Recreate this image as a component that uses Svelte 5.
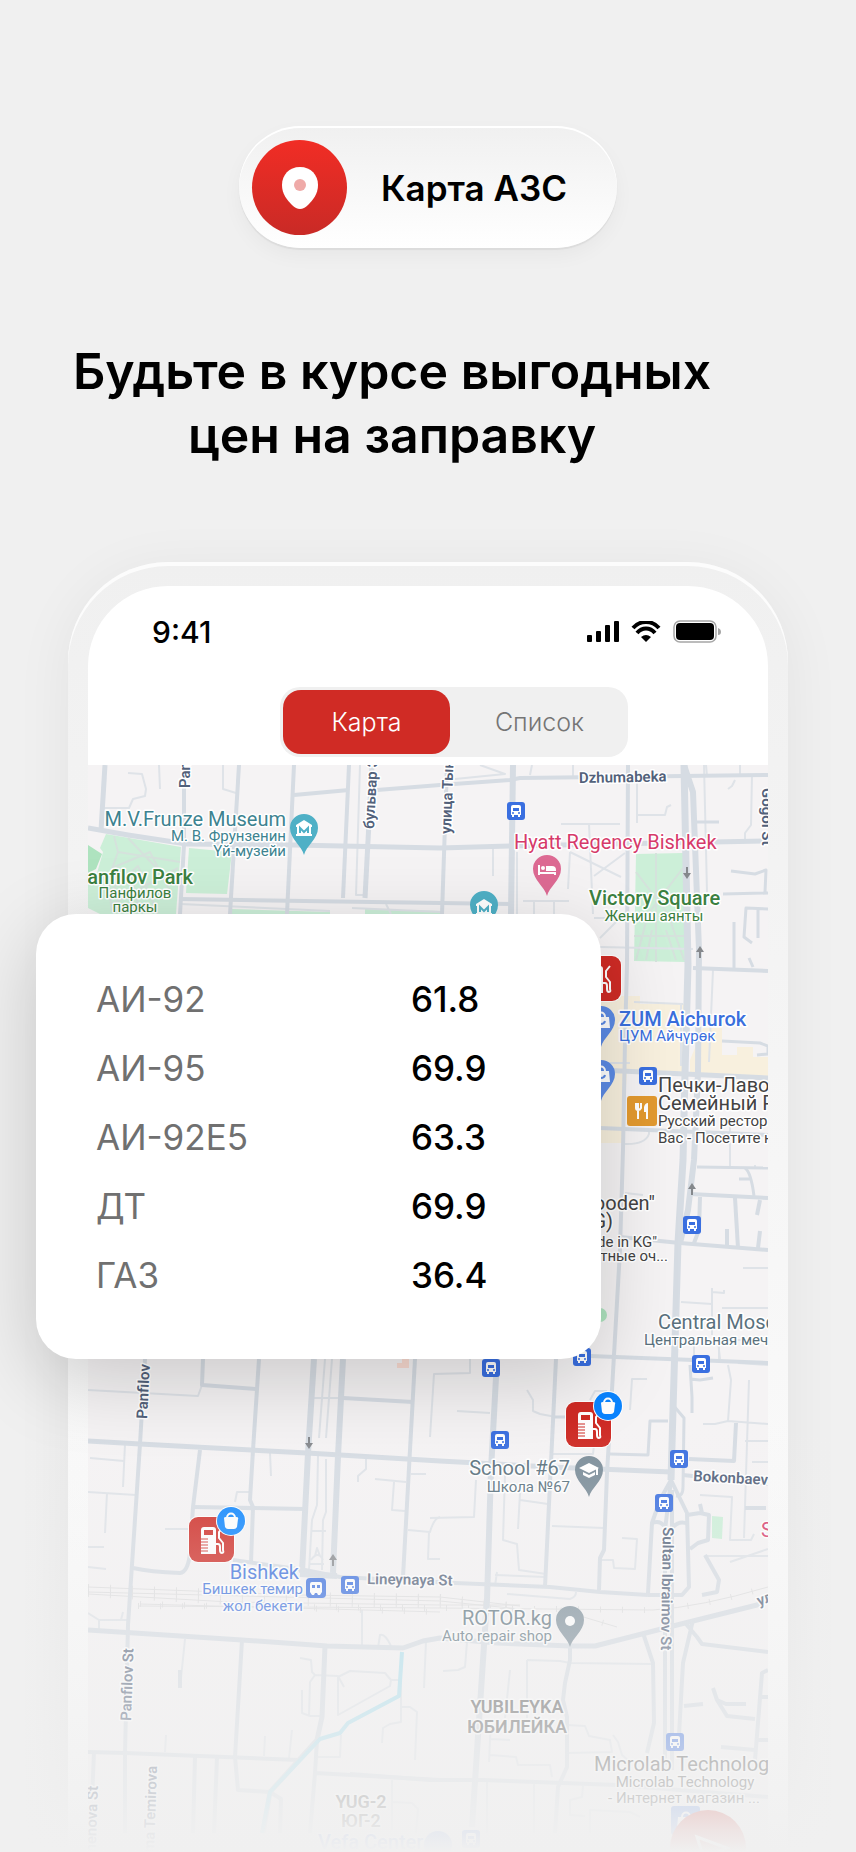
<script lang="ts">
    type Point = { x: number; y: number };
    type Road = { d: string; w: number };
    type Label = Point & {
        text: string;
        kind: string;
        small?: boolean;
        anchor?: "start" | "middle" | "end";
        rotate?: number;
    };

    const tabs = ["Карта", "Список"];
    let activeTab = $state("Карта");

    const prices = [
        { fuel: "АИ-92", price: "61.8" },
        { fuel: "АИ-95", price: "69.9" },
        { fuel: "АИ-92Е5", price: "63.3" },
        { fuel: "ДТ", price: "69.9" },
        { fuel: "ГАЗ", price: "36.4" }
    ];

    const roads: Road[] = [
        { w: 5, d: "M105 765L101 831" },
        { w: 5, d: "M88 828L128 835L187 844L293 845L440 848L510 846L713 842L768 841" },
        { w: 4, d: "M184 765V845L180 914" },
        { w: 4, d: "M239 765L230 914" },
        { w: 4, d: "M294 765L287 914" },
        { w: 4, d: "M349 765L343 898" },
        { w: 4, d: "M294 795L349 790" },
        { w: 5, d: "M372 765L365 898" },
        { w: 4, d: "M377 790L440 785L510 780L520 778L683 776L768 775" },
        { w: 4, d: "M447 765L442 914" },
        { w: 6, d: "M513 765L511 914" },
        { w: 4, d: "M180 899L440 903L510 904" },
        { w: 4, d: "M628 765L627 965L625 1040L623 1150L620 1250L612 1390L607 1473L604 1550L600 1558L599 1590" },
        { w: 7, d: "M684 765L688 965L685 1073L683 1160L678 1243L673 1410L671 1480" },
        { w: 6, d: "M684 765L693 792L699 950L698 1073L694 1160L688 1210L680 1243" },
        { w: 4, d: "M671 1480L660 1500L652 1523L648 1593" },
        { w: 4, d: "M671 1480L687 1513L689 1587L682 1595H648" },
        { w: 4, d: "M671 1480L665 1530V1765M672 1490V1770" },
        { w: 4, d: "M652 1523Q660 1520 664 1526M673 1527Q680 1520 688 1524" },
        { w: 4, d: "M693 968L768 971" },
        { w: 5, d: "M600 1070L768 1078" },
        { w: 4, d: "M600 1128L768 1135" },
        { w: 3, d: "M697 1167L768 1168" },
        { w: 4, d: "M690 1194L768 1198" },
        { w: 4, d: "M620 1237L680 1243L768 1250" },
        { w: 4, d: "M735 1198L738 1248" },
        { w: 4, d: "M700 1197L699 1230L694 1243" },
        { w: 3, d: "M745 1168Q751 1172 754 1196M739 1179H751" },
        { w: 4, d: "M727 1229V1246M760 1200L757 1215M760 1231L758 1248" },
        { w: 4, d: "M590 1356L768 1363" },
        { w: 3, d: "M695 822H719M731 871L755 874L766 870L765 892M723 894L768 893M768 909L746 908L744 937L752 943M758 909V938M734 922V970M749 958L753 967" },
        { w: 3, d: "M722 1041L760 1043L768 1046V1054L757 1055" },
        { w: 4, d: "M203 1359L202 1385L257 1389" },
        { w: 4, d: "M259 1359L253 1450L250 1500L253 1507L251 1563" },
        { w: 5, d: "M88 1441L140 1444L307 1453L440 1461L550 1467L671 1472" },
        { w: 4, d: "M145 1359L140 1444L128 1625L125 1753V1833" },
        { w: 6, d: "M314 1359L308 1453L302 1573" },
        { w: 6, d: "M343 1359L338 1456L333 1573" },
        { w: 6, d: "M300 1574L337 1576" },
        { w: 4, d: "M343 1398L413 1402" },
        { w: 4, d: "M415 1359L403 1577" },
        { w: 4, d: "M200 1450L193 1507L190 1553Q188 1572 180 1573Q150 1572 133 1568" },
        { w: 4, d: "M193 1507L305 1509" },
        { w: 4, d: "M233 1560L305 1570L340 1577L455 1583L550 1587L600 1592L648 1595" },
        { w: 6, d: "M497 1359L491 1470L487 1600L472 1827" },
        { w: 4, d: "M556 1359L545 1587" },
        { w: 3, d: "M554 1417H568M610 1454L648 1455L650 1421H668" },
        { w: 3, d: "M673 1405L684 1418L683 1487Q683 1497 676 1496M690 1365L692 1397V1413M690 1379L700 1380L713 1378" },
        { w: 4, d: "M689 1459L734 1461L736 1423" },
        { w: 4, d: "M687 1515L700 1513L709 1515L708 1540L698 1543L690 1549M700 1504L702 1513" },
        { w: 4, d: "M705 1555L719 1580L717 1592L702 1595M683 1475L768 1484M745 1508H766" },
        { w: 5, d: "M88 1630L242 1640L327 1646L403 1648L423 1641L440 1638L497 1643L570 1646H595L677 1625L757 1605L768 1598" },
        { w: 4, d: "M686 1624L697 1637L702 1644L768 1652M693 1620L683 1663L679 1735" },
        { w: 4, d: "M570 1643V1660L565 1683L563 1700L567 1717V1767L558 1787L555 1833" },
        { w: 4, d: "M643 1633L653 1663L654 1723L647 1753" },
        { w: 4, d: "M350 1774L430 1780H483L617 1785L768 1797" },
        { w: 4, d: "M768 1670L762 1673L755 1760M713 1688L717 1700L727 1716L755 1719M717 1700L726 1704L746 1704M684 1706L703 1704M721 1747L755 1750M758 1740H768M760 1697H768" },
        { w: 4, d: "M242 1640L235 1757L238 1790L270 1792L281 1799L280 1833" },
        { w: 5, d: "M325 1646L322 1717L317 1740L270 1792L263 1833" },
        { w: 4, d: "M88 1752L125 1753L298 1760M317 1740L315 1773L310 1833M315 1773L440 1780" },
        { w: 4, d: "M195 1757L193 1833M217 1757L214 1833M94 1752L92 1800M180 1670V1688" }
    ];

    const lanes = [
        "M103 808L129 808L133 799L145 796L146 789L142 774L128 773M159 765L160 789M223 765V789L236 793",
        "M360 765L356 895H364M180 904L330 911M352 908L442 912M386 904L391 914",
        "M480 765L505 774L455 779M532 765L530 775M573 765V776M637 776V823M636 815H665L667 807L671 805M561 824H620M589 824L593 914",
        "M493 848V876M570 852L568 889M517 852V914M570 852L621 877M625 853L594 876M523 901H569M534 901V914M554 901V914M594 918H612M600 938L626 912M600 947L693 949",
        "M752 775L751 825L745 833V841M704 765L707 892M735 780L732 786L728 789M706 765L707 776M740 765V774",
        "M713 970L709 1062M634 1002L683 1004M681 1004V1066M624 1144Q645 1145 649 1134V1130M600 1063H630",
        "M730 1120V1167M755 1165V1168M625 1193L643 1195M743 1268H768M712 1288V1335M712 1292L724 1293V1290M681 1302L712 1304M722 1308H768M694 1345V1355M720 1340H768M719 1345V1361",
        "M88 1390L198 1396L202 1385M90 1458L124 1461M125 1444L123 1487M88 1492L136 1495M107 1493L105 1533M88 1547H104M88 1567L106 1569M165 1529H190M235 1502L237 1492H249M270 1453L271 1476",
        "M325 1359L319 1438M332 1359L326 1438M313 1398H338M318 1456L317 1505L312 1520L309 1570M326 1459V1512L323 1520L322 1570M312 1531H326M310 1564H324M311 1560Q318 1550 323 1560M315 1556L317 1548L320 1556",
        "M366 1459V1469L358 1476V1482M375 1479L406 1482M394 1482L392 1510L405 1511M411 1474H426M408 1530L430 1532Q434 1518 440 1517M429 1532L428 1559H440",
        "M470 1359V1373L434 1374L430 1437M457 1411L490 1413M527 1390L533 1400V1411L540 1414L556 1417M607 1391H595L590 1400M630 1410L632 1379H647M552 1454L593 1454L594 1445",
        "M476 1480L474 1517L430 1518M520 1500L548 1504M505 1475L503 1540L517 1544L519 1570L546 1574M520 1493L518 1529M552 1526L604 1528M622 1538L637 1539L635 1569L614 1568L613 1560H601",
        "M703 1424H715L728 1421L768 1424M728 1365L731 1380L728 1421M720 1359L718 1341M749 1380L744 1538M738 1363L768 1365M745 1441H768M752 1462H768M700 1495L732 1497L730 1540H751L754 1534M730 1562L768 1549M705 1556H768",
        "M495 1575L545 1577M497 1572L495 1586M507 1594L570 1599Q576 1597 576 1592M88 1613L99 1620H127M123 1612L121 1620M99 1620V1630M185 1639L180 1688",
        "M300 1658L311 1660L312 1672L315 1675L338 1676L344 1687M315 1675L310 1682L309 1716M302 1690V1713L310 1716H322M338 1715V1677L350 1671L385 1673L391 1680L390 1686ZM378 1648L380 1635Q385 1633 391 1646M362 1610V1645",
        "M391 1680H401V1722L390 1724L383 1728L382 1743M401 1707L410 1707L417 1712L415 1760M426 1641L424 1688M341 1735L340 1757H317M166 1735L165 1752M265 1736L264 1756M292 1730L289 1758",
        "M527 1660L560 1661L570 1663L653 1664M527 1660V1718M510 1670L505 1718M467 1642L465 1667L458 1670L443 1671M567 1725L585 1726L589 1736L610 1740L612 1752L568 1753M613 1735L618 1742L622 1755L630 1762",
        "M491 1720L489 1762M491 1739L510 1740M490 1755L516 1757L518 1765H550L552 1777M487 1782V1833M534 1784V1833M583 1786L582 1797L570 1800V1815L585 1816M590 1833V1810L630 1812L640 1817M392 1780V1830M392 1802L412 1803L418 1809L416 1833"
    ];

    const rails = [
        "M88 1587L300 1595L440 1597L520 1606",
        "M88 1592L440 1601L520 1609",
        "M88 1594L230 1602L440 1605H520",
        "M138 1606L440 1608L653 1610Q700 1607 768 1587",
        "M140 1604L440 1612",
        "M560 1610L617 1627"
    ];

    const paths = [
        "M114 836L118 852L108 880L112 912M118 852L180 862M112 868L150 852L172 895M128 838L164 876L178 884M106 895L138 866L158 914M110 905L178 868M132 880L140 912",
        "M656 853V962M636 872L668 914L684 960M683 868L648 914L636 960M634 936H684M646 960L652 930M676 960L666 930"
    ];

    const labels: Label[] = [
        { text: "M.V.Frunze Museum", x: 286, y: 826, kind: "culture", anchor: "end" },
        { text: "М. В. Фрунзенин", x: 286, y: 841, kind: "culture", small: true, anchor: "end" },
        { text: "Үй-музейи", x: 286, y: 856, kind: "culture", small: true, anchor: "end" },
        { text: "Panfilov Park", x: 193, y: 884, kind: "park strong", anchor: "end" },
        { text: "Панфилов", x: 135, y: 898, kind: "park", small: true, anchor: "middle" },
        { text: "паркы", x: 135, y: 912, kind: "park", small: true, anchor: "middle" },
        { text: "Hyatt Regency Bishkek", x: 514, y: 849, kind: "hotel" },
        { text: "Victory Square", x: 589, y: 905, kind: "park strong" },
        { text: "Жеңиш аянты", x: 654, y: 921, kind: "park", small: true, anchor: "middle" },
        { text: "ZUM Aichurok", x: 619, y: 1026, kind: "shop strong" },
        { text: "ЦУМ Айчүрөк", x: 619, y: 1041, kind: "shop", small: true },
        { text: "Печки-Лавочки", x: 658, y: 1092, kind: "food" },
        { text: "Семейный Ресторан", x: 658, y: 1110, kind: "food" },
        { text: "Русский ресторан", x: 658, y: 1126, kind: "food", small: true },
        { text: "Вас - Посетите наш", x: 658, y: 1143, kind: "food", small: true },
        { text: "Wooden\"", x: 655, y: 1210, kind: "food", anchor: "end" },
        { text: "(KG)", x: 613, y: 1228, kind: "food", anchor: "end" },
        { text: "Made in KG\"", x: 657, y: 1247, kind: "food", small: true, anchor: "end" },
        { text: "тные оч...", x: 668, y: 1261, kind: "food", small: true, anchor: "end" },
        { text: "Central Mosque", x: 658, y: 1329, kind: "place" },
        { text: "Центральная мечеть", x: 644, y: 1345, kind: "place", small: true },
        { text: "School #67", x: 570, y: 1475, kind: "place", anchor: "end" },
        { text: "Школа №67", x: 570, y: 1492, kind: "place", small: true, anchor: "end" },
        { text: "Bishkek", x: 299, y: 1579, kind: "shop", anchor: "end" },
        { text: "Бишкек темир", x: 303, y: 1594, kind: "shop", small: true, anchor: "end" },
        { text: "жол бекети", x: 303, y: 1611, kind: "shop", small: true, anchor: "end" },
        { text: "ROTOR.kg", x: 552, y: 1625, kind: "place", anchor: "end" },
        { text: "Auto repair shop", x: 552, y: 1641, kind: "place", small: true, anchor: "end" },
        { text: "YUBILEYKA", x: 517, y: 1713, kind: "district", anchor: "middle" },
        { text: "ЮБИЛЕЙКА", x: 517, y: 1733, kind: "district", anchor: "middle" },
        { text: "YUG-2", x: 361, y: 1808, kind: "district", anchor: "middle" },
        { text: "ЮГ-2", x: 361, y: 1827, kind: "district", anchor: "middle" },
        { text: "Vefa Center", x: 318, y: 1849, kind: "shop strong" },
        { text: "Microlab Technology", x: 594, y: 1771, kind: "food" },
        { text: "Microlab Technology", x: 685, y: 1787, kind: "food", small: true, anchor: "middle" },
        { text: "- Интернет магазин ...", x: 684, y: 1803, kind: "food", small: true, anchor: "middle" },
        { text: "S", x: 761, y: 1537, kind: "hotel" },
        { text: "Dzhumabeka", x: 579, y: 783, kind: "street", rotate: -1 },
        { text: "Panfilov St", x: 190, y: 788, kind: "street", rotate: -90 },
        { text: "бульвар Эркиндик", x: 374, y: 829, kind: "street", rotate: -87 },
        { text: "улица Тыныстанова", x: 451, y: 834, kind: "street", rotate: -88 },
        { text: "Gogol St", x: 762, y: 788, kind: "street", rotate: 90 },
        { text: "Panfilov", x: 147, y: 1419, kind: "street", rotate: -87 },
        { text: "Lineynaya St", x: 367, y: 1584, kind: "street", rotate: 1 },
        { text: "Bokonbaeva", x: 693, y: 1481, kind: "street", rotate: 3 },
        { text: "Sultan Ibraimov St", x: 663, y: 1527, kind: "street", rotate: 91 },
        { text: "ул", x: 759, y: 1606, kind: "street", rotate: -20 },
        { text: "Panfilov St", x: 131, y: 1721, kind: "street", rotate: -88 },
        { text: "Semenova St", x: 98, y: 1786, kind: "street", rotate: -88, anchor: "end" },
        { text: "Kasyma Temirova", x: 157, y: 1766, kind: "street", rotate: -88, anchor: "end" }
    ];

    const busStops: Point[] = [
        { x: 516, y: 811 },
        { x: 648, y: 1076 },
        { x: 692, y: 1225 },
        { x: 582, y: 1357 },
        { x: 701, y: 1364 },
        { x: 491, y: 1368 },
        { x: 500, y: 1440 },
        { x: 679, y: 1459 },
        { x: 664, y: 1503 },
        { x: 350, y: 1585 },
        { x: 675, y: 1742 },
        { x: 471, y: 1839 }
    ];

    const arrows = [
        { x: 687, y: 873, turn: 180 },
        { x: 700, y: 952, turn: 0 },
        { x: 692, y: 1189, turn: 0 },
        { x: 309, y: 1443, turn: 180 },
        { x: 333, y: 1560, turn: 0 }
    ];

    const stations = [
        { x: 576, y: 956, shop: false },
        { x: 566, y: 1402, shop: true },
        { x: 189, y: 1517, shop: true }
    ];
</script>

{#snippet pin(x: number, y: number, color: string)}
    <path
        transform="translate({x} {y})"
        d="M0 27C-2 18-14 11-14 0A14 14 0 0 1 14 0C14 11 2 18 0 27Z"
        fill={color}
    />
{/snippet}

{#snippet museum(x: number, y: number)}
    <g transform="translate({x} {y})">
        <path d="M-8-4L0-9L8-4V-2H-8ZM-7-2H7V5H8V7H-8V5H-7Z" fill="#fff" />
        <path d="M-4 4V-1L0 3L4-1V4" fill="none" stroke="#4fb0c6" stroke-width="2" />
    </g>
{/snippet}

{#snippet bag(x: number, y: number)}
    <g transform="translate({x} {y})">
        <path d="M-8-4H8L9 7H-9Z" fill="#fff" />
        <path d="M-4-4C-4-10 4-10 4-4" fill="none" stroke="#fff" stroke-width="2" />
        <path d="M-4 0C-3 4 3 4 4 0" fill="none" stroke="#5c8be6" stroke-width="2" />
    </g>
{/snippet}

{#snippet bus(x: number, y: number)}
    <g transform="translate({x} {y})">
        <rect x="-9" y="-9" width="18" height="18" rx="3" fill="#3a6fe0" />
        <path
            d="M-5-4Q-5-6-3-6H3Q5-6 5-4V4H4V6H2V4H-2V6H-4V4H-5Z"
            fill="#fff"
        />
        <path d="M-3-3H3V0H-3Z" fill="#3a6fe0" />
        <circle cx="-3" cy="2" r="1" fill="#3a6fe0" />
        <circle cx="3" cy="2" r="1" fill="#3a6fe0" />
    </g>
{/snippet}

{#snippet station(x: number, y: number, shop: boolean)}
    <g transform="translate({x} {y})">
        <rect x="-1" y="-1" width="47" height="47" rx="10" fill="#fff" />
        <rect width="45" height="45" rx="9" fill="#cf2b25" />
        <path d="M12 13Q12 10 15 10H24Q27 10 27 13V37H12Z" fill="#fff" />
        <path d="M15 13H24V18H15Z" fill="#cf2b25" />
        <path d="M12 22H19M12 25H19M12 28H19M12 31H19M12 34H19" stroke="#cf2b25" />
        <path
            d="M27 27H29Q31 27 31 30V33Q31 36 33 36T34 33V26L30 21V15L34 10"
            fill="none"
            stroke="#fff"
            stroke-width="2"
        />
        {#if shop}
            <circle cx="42" cy="4" r="15" fill="#fff" />
            <circle cx="42" cy="4" r="14" fill="#0a84ff" />
            <path
                d="M35 1Q35 0 37 0H47Q50 0 49 2L48 10Q47 12 45 12H39Q37 12 36 10Z"
                fill="#fff"
            />
            <path d="M38 1C38-5 46-5 46 1" fill="none" stroke="#fff" stroke-width="2" />
        {/if}
    </g>
{/snippet}

<main class="page">
    <div class="badge">
        <span class="badge-icon">
            <svg viewBox="0 0 36 42" width="36" height="42" aria-hidden="true">
                <path
                    d="M18 0C7 0 0 8 0 18C0 27 5 33 10 38Q14 42 18 42T26 38C31 33 36 27 36 18C36 8 29 0 18 0Z"
                    fill="#fff"
                />
                <circle cx="18" cy="18" r="6" fill="#efaaa8" />
            </svg>
        </span>
        <span>Карта АЗС</span>
    </div>

    <h1>Будьте в курсе выгодных<br />цен на заправку</h1>

    <div class="stage">
        <div class="phone">
            <div class="screen">
                <div class="status">
                    <span class="time">9:41</span>
                    <div class="status-icons">
                        <svg viewBox="0 0 32 21" width="32" height="21" aria-hidden="true">
                            <rect y="14" width="5" height="7" rx="1" />
                            <rect x="9" y="10" width="5" height="11" rx="1" />
                            <rect x="18" y="4" width="5" height="17" rx="1" />
                            <rect x="27" width="5" height="21" rx="1" />
                        </svg>
                        <svg viewBox="0 0 30 21" width="30" height="21" aria-hidden="true">
                            <path
                                d="M2 7C9-1 21-1 28 7M6 12C11 6 19 6 24 12"
                                fill="none"
                                stroke="#000"
                                stroke-width="4"
                            />
                            <path d="M10 16Q15 12 20 16L15 21Z" />
                        </svg>
                        <svg viewBox="0 0 48 23" width="48" height="23" aria-hidden="true">
                            <rect
                                x="1"
                                y="1"
                                width="42"
                                height="21"
                                rx="6"
                                fill="none"
                                stroke="#a6a6a6"
                                stroke-width="1.5"
                            />
                            <rect x="3" y="3" width="38" height="17" rx="4" />
                            <path d="M45 8Q48 9 48 12T45 15Z" fill="#a6a6a6" />
                        </svg>
                    </div>
                </div>

                <div class="tabs" role="group" aria-label="Вид">
                    {#each tabs as tab (tab)}
                        <button
                            type="button"
                            class:active={activeTab === tab}
                            aria-pressed={activeTab === tab}
                            onclick={() => (activeTab = tab)}
                        >
                            {tab}
                        </button>
                    {/each}
                </div>

                <svg
                    class="map"
                    viewBox="88 765 680 1087"
                    preserveAspectRatio="xMidYMin slice"
                    role="img"
                    aria-label="Карта"
                >
                    <rect x="88" y="765" width="680" height="1087" fill="#f5f3f4" />

                    <g fill="#f8f0de">
                        <path d="M600 996H640V1004H685V1073H627L622 1143H600Z" />
                        <path d="M690 1060L703 1028H722V1055H737V1047H753V1057H768V1076L690 1073Z" />
                    </g>
                    <g fill="#ccefd8">
                        <path d="M106 834L181 847L176 914H100L88 908V876L97 873L103 852L100 848Z" />
                        <path d="M189 848L232 852L227 894L186 893Z" />
                        <path d="M232 909L330 912V914H232ZM365 909L442 911V914H365Z" />
                        <path d="M636 854L683 853L685 962L634 961Z" />
                        <path d="M712 1516L723 1517L722 1539L712 1538Z" />
                        <circle cx="600" cy="1315" r="7" fill="#aee3bf" />
                        <path d="M88 845L102 854L96 869L88 873Z" fill="#aee3bf" />
                    </g>
                    <path d="M397 1363H402V1359H409V1368H397Z" fill="#fbdcd2" />

                    <g class="lines">
                        {#each paths as d}
                            <path {d} stroke="#d5e2dc" stroke-width="2" />
                        {/each}
                        {#each lanes as d}
                            <path {d} stroke="#dfe3e8" stroke-width="2" />
                        {/each}
                        {#each rails as d}
                            <path {d} stroke="#dededf" />
                            <path {d} class="ties" />
                        {/each}
                        {#each roads as road}
                            <path d={road.d} stroke="#d6dce3" stroke-width={road.w} />
                        {/each}
                        <path
                            d="M402 1652L399 1696L348 1723L340 1733L320 1739L270 1792L262 1833"
                            stroke="#aee0ee"
                            stroke-width="4"
                        />
                    </g>

                    {#each arrows as arrow}
                        <path
                            transform="translate({arrow.x} {arrow.y}) rotate({arrow.turn})"
                            d="M0-6L4 0H1V6H-1V0H-4Z"
                            fill="#85888c"
                        />
                    {/each}

                    {#each labels as label}
                        <text
                            transform="translate({label.x} {label.y}) rotate({label.rotate ?? 0})"
                            class="label {label.kind}"
                            class:small={label.small}
                            text-anchor={label.anchor ?? "start"}>{label.text}</text
                        >
                    {/each}

                    {#each busStops as stop}
                        {@render bus(stop.x, stop.y)}
                    {/each}
                    <g transform="translate(316 1588)">
                        <rect x="-10" y="-10" width="20" height="20" rx="4" fill="#3a6fe0" />
                        <path d="M-6-4Q-6-6-4-6H4Q6-6 6-4V4L4 7H2L1 5H-1L-2 7H-4L-6 4Z" fill="#fff" />
                        <path d="M-4-3H-1V0H-4ZM1-3H4V0H1Z" fill="#3a6fe0" />
                    </g>

                    {@render pin(304, 828, "#4fb0c6")}
                    {@render museum(304, 829)}
                    {@render pin(484, 905, "#4fb0c6")}
                    {@render museum(484, 908)}
                    {@render pin(547, 869, "#dd6a93")}
                    <g transform="translate(547 870)">
                        <path d="M-9-5H-7V2H9V5H7V4H-7V5H-9Z" fill="#fff" />
                        <path d="M-1 1V-4H5Q9-4 9 0V1Z" fill="#fff" />
                        <circle cx="-4" cy="-2" r="2" fill="#fff" />
                    </g>
                    {@render pin(601, 1020, "#5c8be6")}
                    {@render bag(601, 1021)}
                    {@render pin(601, 1074, "#5c8be6")}
                    {@render bag(601, 1075)}
                    {@render pin(589, 1470, "#7b8d99")}
                    <g transform="translate(589 1470)">
                        <path d="M-10-2L0-7L10-2L0 3Z" fill="#fff" />
                        <path d="M-6 2L0 5L6 2V5L0 8L-6 5Z" fill="#fff" />
                        <path d="M8-2V5" stroke="#fff" stroke-width="2" />
                    </g>
                    {@render pin(570, 1620, "#7b8d99")}
                    <circle cx="570" cy="1621" r="5" fill="#fff" />

                    <g transform="translate(627 1096)">
                        <rect width="30" height="30" rx="3" fill="#e2992f" />
                        <path
                            d="M9 7V12Q9 14 11 14T14 12V7M11 7V23"
                            fill="none"
                            stroke="#fff"
                            stroke-width="2"
                        />
                        <path d="M21 7V23H19V16H17V11Q18 7 21 7Z" fill="#fff" />
                    </g>

                    {#each stations as s}
                        {@render station(s.x, s.y, s.shop)}
                    {/each}

                    <rect x="671" y="1806" width="29" height="29" rx="3" fill="#5c8be6" />
                    {@render bag(686, 1821)}
                    <circle cx="438" cy="1845" r="14" fill="#5c8be6" />
                    <circle cx="708" cy="1848" r="38" fill="#cf2b25" />
                    <path
                        d="M697 1837L727 1848L713 1854L707 1868Z"
                        fill="none"
                        stroke="#fff"
                        stroke-width="3"
                    />
                </svg>
            </div>
        </div>

        <section class="prices">
            <table>
                <tbody>
                    {#each prices as row (row.fuel)}
                        <tr>
                            <th scope="row">{row.fuel}</th>
                            <td>{row.price}</td>
                        </tr>
                    {/each}
                </tbody>
            </table>
        </section>

        <div class="fade"></div>
    </div>
</main>

<style>
    :global(body) {
        margin: 0;
        background: #f0f0f0;
    }
    .page {
        display: flex;
        flex-direction: column;
        padding-top: 126px;
        overflow: hidden;
        font-family: Inter, "Liberation Sans", sans-serif;
        color: #000;
        background: #f0f0f0;
    }
    .badge {
        display: flex;
        align-items: center;
        align-self: center;
        gap: 34px;
        padding: 14px 50px 13px 13px;
        border-radius: 61px;
        background: linear-gradient(#f0f0f0, #fff);
        box-shadow:
            inset 0 2px 0 #fff,
            0 2px 1px #dcdcdc,
            0 8px 20px rgba(0, 0, 0, 0.04);
        font-size: 35px;
        font-weight: 600;
    }
    .badge-icon {
        display: flex;
        align-items: center;
        justify-content: center;
        width: 95px;
        height: 95px;
        border-radius: 50%;
        background: linear-gradient(#f12d25, #c92a26);
    }
    h1 {
        margin: 91px 72px 95px 0;
        font-size: 50px;
        font-weight: 600;
        line-height: 64px;
        text-align: center;
        white-space: nowrap;
    }
    .stage {
        position: relative;
    }
    .phone {
        margin: 0 68px;
        padding: 24px 20px 0;
        border-radius: 100px 100px 0 0;
        background: linear-gradient(#f0f0f0, #fafafa 1000px);
        box-shadow:
            inset 0 4px 0 #fcfcfc,
            0 10px 60px rgba(0, 0, 0, 0.06);
    }
    .screen {
        display: flex;
        flex-direction: column;
        overflow: hidden;
        border-radius: 80px 80px 0 0;
        background: #fff;
    }
    .status {
        display: flex;
        align-items: center;
        justify-content: space-between;
        height: 91px;
        margin-bottom: 10px;
        padding: 0 47px 0 64px;
    }
    .time {
        font-size: 30px;
        font-weight: 500;
    }
    .status-icons {
        display: flex;
        align-items: center;
        gap: 12px;
    }
    .tabs {
        display: grid;
        grid-template-columns: 1fr 1fr;
        align-self: center;
        gap: 6px;
        width: 340px;
        margin: 0 0 8px 52px;
        padding: 3px 5px 3px 3px;
        border-radius: 20px;
        background: #f0f0f0;
    }
    .tabs button {
        height: 64px;
        padding: 0;
        border: 0;
        border-radius: 18px;
        background: none;
        color: #757575;
        font: 300 25px Inter, "Liberation Sans", sans-serif;
        cursor: pointer;
    }
    .tabs button.active {
        background: #d02b25;
        color: #fff;
    }
    .map {
        display: block;
        width: 100%;
    }
    .lines {
        fill: none;
        stroke-linejoin: round;
    }
    .ties {
        stroke: #dededf;
        stroke-width: 6;
        stroke-dasharray: 1 21;
    }
    .label {
        font-family: Roboto, "Liberation Sans", sans-serif;
        font-size: 20px;
        paint-order: stroke;
        stroke: #fff;
        stroke-width: 3px;
        stroke-linejoin: round;
    }
    .small {
        font-size: 15px;
    }
    .strong {
        font-weight: 500;
    }
    .culture {
        fill: #3d8390;
    }
    .park {
        fill: #3b8040;
    }
    .hotel {
        fill: #d63a6a;
    }
    .shop {
        fill: #3a6fdd;
    }
    .food {
        fill: #434343;
    }
    .place {
        fill: #5a717d;
    }
    .district {
        fill: #5c5c5c;
        font-size: 18px;
        font-weight: 600;
    }
    .street {
        fill: #52617a;
        font-size: 15px;
        font-weight: 600;
    }
    .prices {
        position: absolute;
        top: 352px;
        left: 36px;
        box-sizing: border-box;
        width: 66%;
        padding: 50px 60px;
        border-radius: 40px;
        background: #fff;
        box-shadow: 0 20px 80px rgba(0, 0, 0, 0.18);
    }
    table {
        width: 100%;
        border-collapse: collapse;
        font-size: 35px;
    }
    tr {
        height: 69px;
    }
    th {
        padding: 0;
        color: #707070;
        font-weight: 400;
        text-align: left;
    }
    td {
        width: 130px;
        padding: 0;
        font-weight: 500;
    }
    .fade {
        position: absolute;
        right: 0;
        bottom: 0;
        left: 0;
        height: 430px;
        background: linear-gradient(
            rgba(240, 240, 240, 0),
            rgba(240, 240, 240, 0.58) 66%,
            rgba(240, 240, 240, 0.83) 88%,
            rgba(240, 240, 240, 0.94) 95%,
            #f0f0f0
        );
        pointer-events: none;
    }
</style>
